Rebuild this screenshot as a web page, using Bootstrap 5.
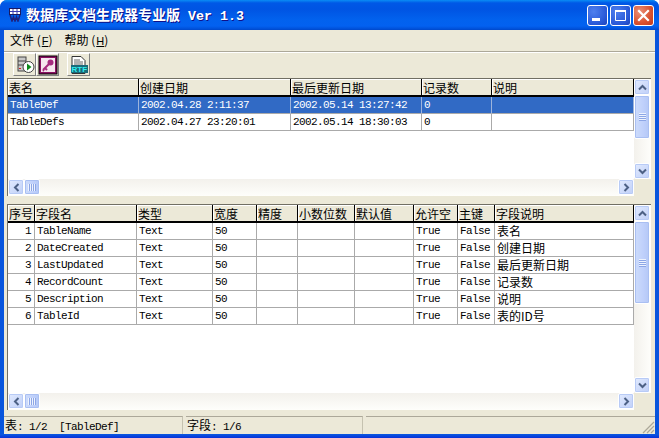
<!DOCTYPE html>
<html lang="zh">
<head>
<meta charset="utf-8">
<title>数据库文档生成器专业版</title>
<link href="https://cdn.jsdelivr.net/npm/bootstrap@5.3.0/dist/css/bootstrap.min.css" rel="stylesheet">
<style>
html,body{margin:0;padding:0;background:#fff;overflow:hidden}
body{font:12px/17px "Liberation Mono","Noto Sans CJK SC",monospace;color:#000}
.win{width:659px;height:438px;border-radius:7px 7px 0 0;overflow:hidden;background:#0855dd}
.titlebar{height:30px;padding:0 5px 0 9px;background:linear-gradient(180deg,#0a8cf5 0,#0058e6 3px,#0054e3 9px,#0262ee 20px,#0361f0 26px,#0050d8 29px,#0047c8 30px)}
.app-name{margin-left:5px;color:#fff;font:bold 13.33px/16px "Liberation Mono","Noto Sans CJK SC",monospace;white-space:pre;text-shadow:1px 1px 0 #0f1089}
.app-name b{font:bold 14px/16px "Noto Sans CJK SC",sans-serif}
.wctl{gap:2px}
.wbtn{width:21px;height:21px;border:1px solid #fff;border-radius:3px;background:radial-gradient(circle at 30% 30%,#4f80ee,#2a5ad8 65%,#1d43bb);padding:0}
.wbtn-close{background:radial-gradient(circle at 30% 30%,#ea9078,#d9512f 60%,#c03a1e)}
.wbtn svg{display:block}
.pane{height:404px;margin:0 4px;background:#ece9d8}
.menubar{height:22px;padding:0 0 2px 6px;border-bottom:1px solid #aca899;box-shadow:inset 0 -1px 0 #ece9d8,0 1px 0 #fff;font:12px/19px "Noto Sans CJK SC",sans-serif}
.menubar a{color:#000;text-decoration:none;margin-right:12px}
.menubar u{font:11px/19px "Liberation Sans",sans-serif;margin-left:1px}
.toolbar{height:26px;padding:1px 0 0 9px}
.tbtn.btn{width:23px;height:23px;padding:0;border:1px solid;border-color:#fff #808080 #808080 #fff;border-radius:0;background:#ece9d8;--bs-btn-bg:#ece9d8}
.tbtn svg{display:block;margin:1px}
.tbtn-gap{margin-left:8px}
.xpgrid{display:grid;grid-template-columns:1fr 17px;grid-template-rows:1fr 17px;margin:0 4px 0 3px;border-left:1px solid #716f64;border-top:1px solid #716f64;background:#fff}
.xpgrid-a{height:118px}
.xpgrid-b{height:206px;margin-top:8px}
.cells{overflow:hidden;background:#fff}
.xptable.table{table-layout:fixed;width:626px;margin:0;border-collapse:separate;border-spacing:0;--bs-table-bg:transparent;--bs-table-border-color:#aaa;border-color:#aaa}
.xptable.table>*,.xptable.table>*>tr{border:0}
.xptable.table>:not(caption)>*>*{padding:1px 0 0 2px;height:17px;background:#fff;color:#000;box-shadow:none;border:0;border-right:1px solid #aaa;border-bottom:1px solid #aaa;font:11px/15px "Liberation Mono","Noto Sans CJK SC",monospace;letter-spacing:-.6px;white-space:pre;overflow:hidden;vertical-align:middle}
.xptable.table>thead>tr>th{height:18px;padding:1px 0 0 1px;background:#ece9d8;border-right:1px solid #000;border-bottom:2px solid #000;font:12px/14px "Noto Sans CJK SC",sans-serif;letter-spacing:0;box-shadow:inset 1px 1px 0 #fff}
.xptable.table>tbody>tr>td.cn{padding-top:0;font:12px/16px "Noto Sans CJK SC",sans-serif;letter-spacing:0}
.xptable.table>tbody>tr>td.num{text-align:right;padding:1px 3px 0 0}
.xptable.table>tbody>tr.sel>td{background:#316ac5;color:#fff;border-right-color:#9db4dc}
.grid-a th:nth-child(1){width:131px}.grid-a th:nth-child(2){width:152px}.grid-a th:nth-child(3){width:131px}.grid-a th:nth-child(4){width:70px}
.grid-b th:nth-child(1){width:27px}.grid-b th:nth-child(2){width:102px}.grid-b th:nth-child(3){width:76px}.grid-b th:nth-child(4){width:44px}.grid-b th:nth-child(5){width:41px}.grid-b th:nth-child(6){width:57px}.grid-b th:nth-child(7){width:59px}.grid-b th:nth-child(8){width:44px}.grid-b th:nth-child(9){width:37px}
.sv{background:linear-gradient(90deg,#f3f1ec,#fefefb);width:17px}
.sh{background:linear-gradient(180deg,#f3f1ec,#fefefb);height:17px}
.corner{background:#ece9d8}
.sb{width:16px;height:16px;flex:none;padding:0;border:1px solid #fff;border-radius:2px;background:linear-gradient(135deg,#e1eafe,#c0d0f8);box-shadow:inset 0 0 0 1px #b8cbf6;display:flex;align-items:center;justify-content:center}
.thumb{flex:none;border:1px solid #fff;border-radius:2px;background:linear-gradient(90deg,#cddcfb,#bfd0fb 60%,#b4c8f6);box-shadow:inset 0 0 0 1px #a9bff2;display:flex;align-items:center;justify-content:center}
.sv .thumb{width:16px}
.sh .thumb{width:16px;height:16px}
.thumb-a{height:44px}
.thumb-b{height:83px}
.grip-v{width:7px;height:8px;background:repeating-linear-gradient(180deg,#eef3fe 0 1px,#8ca6e6 1px 2px)}
.grip-h{width:8px;height:7px;background:repeating-linear-gradient(90deg,#eef3fe 0 1px,#8ca6e6 1px 2px)}
.statusbar{height:18px;margin-top:6px;font:11px/17px "Liberation Mono","Noto Sans CJK SC",monospace;letter-spacing:-.6px;white-space:pre;gap:3px}
.statusbar .cn{font:12px/15px "Noto Sans CJK SC",sans-serif;letter-spacing:0}
.cellbox{border-top:1px solid #aca899;border-right:1px solid #c5c2b0;padding-left:1px;height:18px}
.cb1{width:179px}.cb2{width:177px}.cb3{flex:1;position:relative;border-right:0}
.sizer{position:absolute;right:0;bottom:0;display:block}
.bottomedge{height:4px;background:linear-gradient(180deg,#0a5ae0,#0831d9)}
</style>
</head>
<body>
<div class="win d-flex flex-column">
  <div class="titlebar d-flex align-items-center">
    <svg width="12" height="14" viewBox="0 0 12 14"><rect x="0.5" y="0.5" width="11" height="6" fill="#fff" stroke="#1a1a60"/><path d="M1 3.5h10M4 1v5M8 1v5" stroke="#3a3ab0"/><path d="M1 7l2 6 1.5-4 1.5 4 1.500-4 1.500 4 2-6" fill="none" stroke="#20207a" stroke-width="1.500"/></svg>
    <span class="app-name"><b>数据库文档生成器专业版</b> Ver 1.3</span>
    <div class="ms-auto d-flex wctl">
      <button class="wbtn" type="button" aria-label="最小化"><svg width="19" height="19"><rect x="4" y="12" width="8" height="3" fill="#fff"/></svg></button>
      <button class="wbtn" type="button" aria-label="最大化"><svg width="19" height="19"><path d="M4.500 5.500h10v9h-10z" fill="none" stroke="#fff"/><rect x="4" y="4" width="11" height="2" fill="#fff"/></svg></button>
      <button class="wbtn wbtn-close" type="button" aria-label="关闭"><svg width="19" height="19"><path d="M5 5l9 9M14 5l-9 9" stroke="#fff" stroke-width="2.200" stroke-linecap="square"/></svg></button>
    </div>
  </div>
  <div class="pane d-flex flex-column">
    <nav class="menubar d-flex"><a href="#">文件 (<u>F</u>)</a><a href="#">帮助 (<u>H</u>)</a></nav>
    <div class="toolbar d-flex">
      <button class="btn tbtn" type="button" aria-label="生成"><svg width="20" height="20" viewBox="0 0 20 20"><rect x="3" y="2" width="8" height="14" fill="#c8c8c8" stroke="#444"/><path d="M3 6h8M3 10h8" stroke="#444"/><rect x="4" y="13" width="2" height="1" fill="#d02020"/><circle cx="13.500" cy="12" r="5.500" fill="#fff" stroke="#404040"/><path d="M12 8.500l4.500 3.500-4.500 3.500z" fill="#0a8a1a"/></svg></button>
      <button class="btn tbtn" type="button" aria-label="密钥"><svg width="20" height="20" viewBox="0 0 20 20"><rect x="1" y="1" width="18" height="18" fill="#8a0f62" stroke="#000"/><rect x="3" y="3" width="14" height="14" fill="#f5e6ee"/><circle cx="12.500" cy="7.500" r="3" fill="#a52a7e"/><path d="M11 9l-6 6M7 13l2 2M5 15l1 1" stroke="#a52a7e" stroke-width="2"/></svg></button>
      <button class="btn tbtn tbtn-gap" type="button" aria-label="RTF"><svg width="20" height="20" viewBox="0 0 20 20"><path d="M3 1.500h9l4 4v13H3z" fill="#fff" stroke="#333"/><path d="M5 5h6M5 7h9M5 9h9" stroke="#666"/><rect x="2" y="10" width="17" height="8" fill="#1a6a7a"/><text x="2.500" y="17" font-family="Liberation Sans" font-size="8" font-weight="700" fill="#30f0f0">RTF</text></svg></button>
    </div>

    <div class="xpgrid xpgrid-a">
      <div class="cells">
        <table class="table xptable grid-a">
          <thead><tr><th>表名</th><th>创建日期</th><th>最后更新日期</th><th>记录数</th><th>说明</th></tr></thead>
          <tbody>
            <tr class="sel"><td>TableDef</td><td>2002.04.28 2:11:37</td><td>2002.05.14 13:27:42</td><td>0</td><td></td></tr>
            <tr><td>TableDefs</td><td>2002.04.27 23:20:01</td><td>2002.05.14 18:30:03</td><td>0</td><td></td></tr>
          </tbody>
        </table>
      </div>
      <div class="sv d-flex flex-column">
        <button class="sb" type="button" aria-label="上"><svg width="9" height="7"><path d="M1 5.500l3.500-3.500 3.500 3.500" fill="none" stroke="#4d6185" stroke-width="2"/></svg></button>
        <div class="thumb thumb-a"><span class="grip-v"></span></div>
        <div class="flex-grow-1"></div>
        <button class="sb" type="button" aria-label="下"><svg width="9" height="7"><path d="M1 1.500l3.500 3.500 3.500-3.500" fill="none" stroke="#4d6185" stroke-width="2"/></svg></button>
      </div>
      <div class="sh d-flex">
        <button class="sb" type="button" aria-label="左"><svg width="7" height="9"><path d="M5.500 1l-3.500 3.500 3.500 3.500" fill="none" stroke="#4d6185" stroke-width="2"/></svg></button>
        <div class="thumb"><span class="grip-h"></span></div>
        <div class="flex-grow-1"></div>
        <button class="sb" type="button" aria-label="右"><svg width="7" height="9"><path d="M1.500 1l3.500 3.500-3.500 3.500" fill="none" stroke="#4d6185" stroke-width="2"/></svg></button>
      </div>
      <div class="corner"></div>
    </div>

    <div class="xpgrid xpgrid-b">
      <div class="cells">
        <table class="table xptable grid-b">
          <thead><tr><th>序号</th><th>字段名</th><th>类型</th><th>宽度</th><th>精度</th><th>小数位数</th><th>默认值</th><th>允许空</th><th>主键</th><th>字段说明</th></tr></thead>
          <tbody>
            <tr><td class="num">1</td><td>TableName</td><td>Text</td><td>50</td><td></td><td></td><td></td><td>True</td><td>False</td><td class="cn">表名</td></tr>
            <tr><td class="num">2</td><td>DateCreated</td><td>Text</td><td>50</td><td></td><td></td><td></td><td>True</td><td>False</td><td class="cn">创建日期</td></tr>
            <tr><td class="num">3</td><td>LastUpdated</td><td>Text</td><td>50</td><td></td><td></td><td></td><td>True</td><td>False</td><td class="cn">最后更新日期</td></tr>
            <tr><td class="num">4</td><td>RecordCount</td><td>Text</td><td>50</td><td></td><td></td><td></td><td>True</td><td>False</td><td class="cn">记录数</td></tr>
            <tr><td class="num">5</td><td>Description</td><td>Text</td><td>50</td><td></td><td></td><td></td><td>True</td><td>False</td><td class="cn">说明</td></tr>
            <tr><td class="num">6</td><td>TableId</td><td>Text</td><td>50</td><td></td><td></td><td></td><td>True</td><td>False</td><td class="cn">表的ID号</td></tr>
          </tbody>
        </table>
      </div>
      <div class="sv d-flex flex-column">
        <button class="sb" type="button" aria-label="上"><svg width="9" height="7"><path d="M1 5.500l3.500-3.500 3.500 3.500" fill="none" stroke="#4d6185" stroke-width="2"/></svg></button>
        <div class="thumb thumb-b"><span class="grip-v"></span></div>
        <div class="flex-grow-1"></div>
        <button class="sb" type="button" aria-label="下"><svg width="9" height="7"><path d="M1 1.500l3.500 3.500 3.500-3.500" fill="none" stroke="#4d6185" stroke-width="2"/></svg></button>
      </div>
      <div class="sh d-flex">
        <button class="sb" type="button" aria-label="左"><svg width="7" height="9"><path d="M5.500 1l-3.500 3.500 3.500 3.500" fill="none" stroke="#4d6185" stroke-width="2"/></svg></button>
        <div class="thumb"><span class="grip-h"></span></div>
        <div class="flex-grow-1"></div>
        <button class="sb" type="button" aria-label="右"><svg width="7" height="9"><path d="M1.500 1l3.500 3.500-3.500 3.500" fill="none" stroke="#4d6185" stroke-width="2"/></svg></button>
      </div>
      <div class="corner"></div>
    </div>

    <div class="statusbar d-flex">
      <div class="cellbox cb1"><span class="cn">表</span>: 1/2  [TableDef]</div>
      <div class="cellbox cb2"><span class="cn">字段</span>: 1/6</div>
      <div class="cellbox cb3"><svg class="sizer" width="14" height="14" viewBox="0 0 14 14"><path d="M13 2L2 13M13 6L6 13M13 10l-3 3" stroke="#aca899" stroke-width="1.200"/></svg></div>
    </div>
  </div>
  <div class="bottomedge"></div>
</div>
</body>
</html>
